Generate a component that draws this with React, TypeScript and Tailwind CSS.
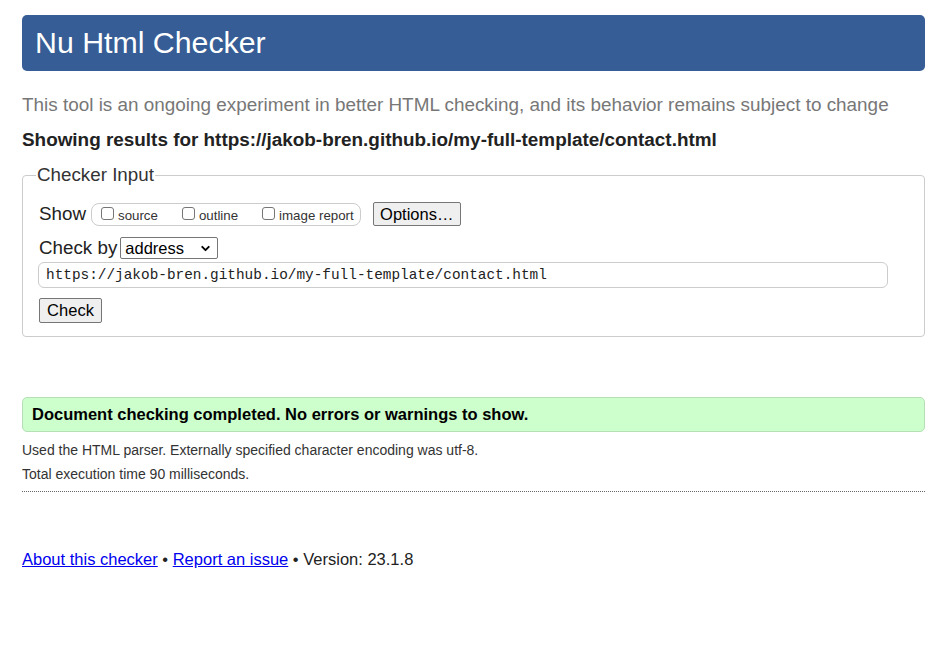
import { ChevronDown } from 'lucide-react';

const url = 'https://jakob-bren.github.io/my-full-template/contact.html';

const showOptions = [
  { id: 'source', label: 'source', gap: 'mr-[24px]' },
  { id: 'outline', label: 'outline', gap: 'mr-[24px]' },
  { id: 'image', label: 'image report', gap: 'mr-[6px]' },
];

function Checkbox() {
  return <span className="inline-block h-[13px] w-[13px] shrink-0 rounded-[3px] border border-[#767676] bg-white" />;
}

export default function App() {
  return (
    <main className="min-h-[661px] bg-white px-[22px] pt-[15px] font-['Liberation_Sans',Arial,sans-serif] text-[#222]">
      <h1 className="flex h-[56px] w-[903px] items-center rounded-[5px] bg-[#365d95] pl-[13px] text-[30.3px] leading-none text-white">
        Nu Html Checker
      </h1>

      <p className="mt-[23px] text-[18.9px] leading-[22px] text-[#777]">
        This tool is an ongoing experiment in better HTML checking, and its behavior remains subject to change
      </p>
      <p className="mt-[13px] text-[18.9px] font-bold leading-[22px] text-[#222]">
        Showing results for {url}
      </p>

      <fieldset className="mt-[13px] w-[903px] rounded-[4px] border border-[#ccc] pb-[13px] pl-[16px]">
        <legend className="ml-[-3px] px-[1px] text-[18.8px] leading-[22px] text-[#333]">Checker Input</legend>

        <div className="mt-[16px] flex items-center">
          <span className="text-[18.8px] leading-[24px] text-[#222]">Show</span>
          <div className="ml-[5px] flex h-[23px] items-center rounded-[8px] border border-[#ccc] pl-[9px]">
            {showOptions.map((opt) => (
              <label key={opt.id} className={`flex items-center ${opt.gap}`}>
                <Checkbox />
                <span className="ml-[4px] mt-[4px] text-[13.3px] leading-none text-[#333]">{opt.label}</span>
              </label>
            ))}
          </div>
          <button className="ml-[12px] h-[24px] w-[88px] rounded-[2px] border border-[#767676] bg-[#efefef] text-[16.5px] leading-none text-black">
            Options…
          </button>
        </div>

        <div className="mt-[10px] flex items-center">
          <span className="text-[18.8px] leading-[24px] text-[#222]">Check by</span>
          <div className="ml-[3px] flex h-[22px] w-[98px] items-center justify-between rounded-[2px] border border-[#767676] bg-white pl-[4px] pr-[5px] text-[16.5px] leading-none text-black">
            <span>address</span>
            <ChevronDown size={13} strokeWidth={3.5} />
          </div>
        </div>

        <div className="mt-[2px] ml-[-1px] flex h-[26px] w-[850px] items-center rounded-[6px] border border-[#ccc] pl-[7px] font-['Liberation_Mono',monospace] text-[14.4px] leading-none text-[#222]">
          {url}
        </div>

        <button className="mt-[10px] h-[25px] w-[63px] rounded-[2px] border border-[#767676] bg-[#efefef] text-[16.5px] leading-none text-black">
          Check
        </button>
      </fieldset>

      <div className="mt-[60px] flex h-[35px] w-[903px] items-center rounded-[5px] border border-[#b6dfb6] bg-[#ccffcc] pl-[9px] text-[16.5px] font-bold text-black">
        Document checking completed. No errors or warnings to show.
      </div>

      <p className="mt-[9px] text-[14px] leading-[18px] text-[#333]">
        Used the HTML parser. Externally specified character encoding was utf-8.
      </p>
      <p className="mt-[6px] text-[14px] leading-[18px] text-[#333]">Total execution time 90 milliseconds.</p>
      <hr className="mt-[8px] w-[903px] border-0 border-t border-dotted border-[#666]" />

      <p className="mt-[57px] text-[16.5px] leading-[20px] text-[#222]">
        <a href="#" className="text-[#0000ee] underline">About this checker</a>
        {' • '}
        <a href="#" className="text-[#0000ee] underline">Report an issue</a>
        {' • Version: 23.1.8'}
      </p>
    </main>
  );
}
